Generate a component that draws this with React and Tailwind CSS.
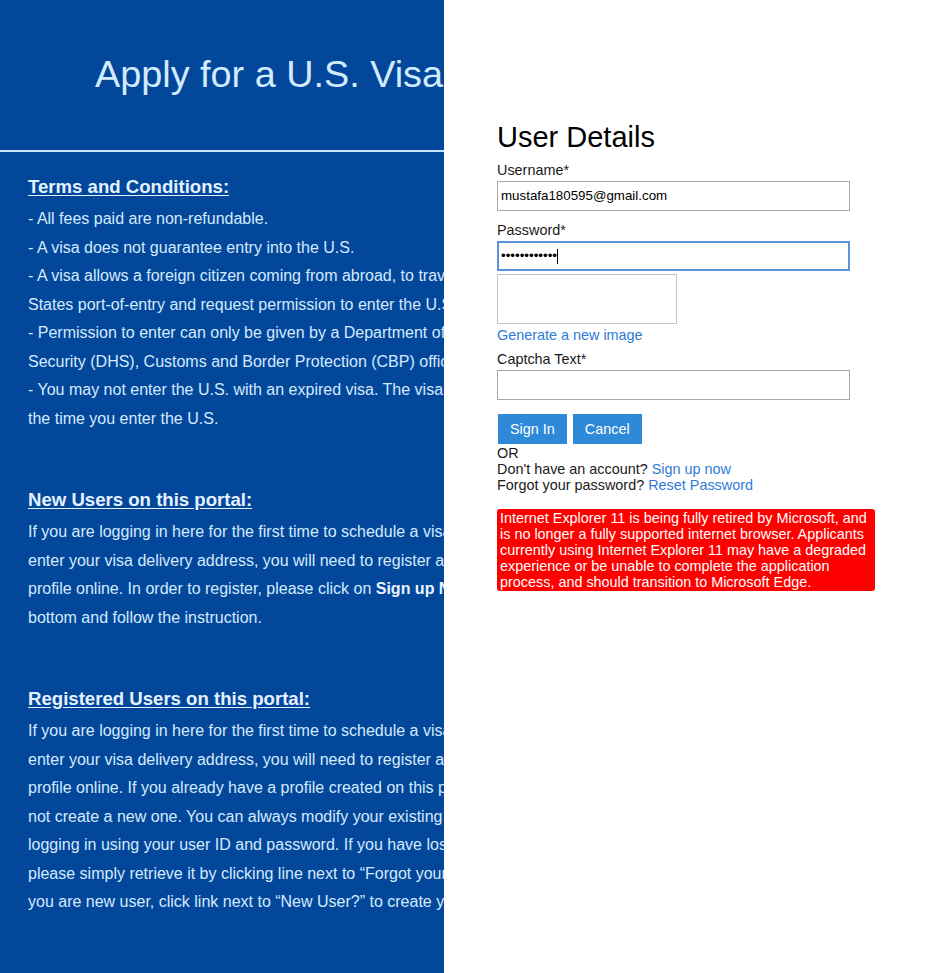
const terms = [
  ['- All fees paid are non-refundable.'],
  ['- A visa does not guarantee entry into the U.S.'],
  [
    '- A visa allows a foreign citizen coming from abroad, to travel to the United',
    'States port-of-entry and request permission to enter the U.S.',
  ],
  [
    '- Permission to enter can only be given by a Department of Homeland',
    'Security (DHS), Customs and Border Protection (CBP) officials.',
  ],
  [
    '- You may not enter the U.S. with an expired visa. The visa must be valid at',
    'the time you enter the U.S.',
  ],
]

const registered = [
  'If you are logging in here for the first time to schedule a visa appointment or',
  'enter your visa delivery address, you will need to register and create a',
  'profile online. If you already have a profile created on this portal, please do',
  'not create a new one. You can always modify your existing profile by',
  'logging in using your user ID and password. If you have lost your password,',
  'please simply retrieve it by clicking line next to \u201cForgot your password?\u201d. If',
  'you are new user, click link next to \u201cNew User?\u201d to create your profile.',
]

function Heading({ children, className = '' }) {
  return (
    <h2 className={`text-[18.6px] leading-[22px] font-bold underline underline-offset-2 text-[#e4f2ff] ${className}`}>
      {children}
    </h2>
  )
}

function Lines({ lines }) {
  return lines.map((l, i) => (
    <div key={i} className="whitespace-nowrap">
      {l}
    </div>
  ))
}

export default function App() {
  return (
    <div className="flex min-h-screen font-['Liberation_Sans',Arial,sans-serif]">
      {/* LEFT INFO COLUMN */}
      <div className="w-[444px] shrink-0 bg-[#03479a] overflow-hidden">
        <div className="h-[152px] border-b-2 border-[#c4e3ff] pl-[95px] pt-[53px]">
          <h1 className="text-[37.8px] leading-[43px] text-[#d2ebff] whitespace-nowrap">
            Apply for a U.S. Visa
          </h1>
        </div>

        <div className="w-[600px] pl-[28px] pt-[24px] text-[16px] leading-[28.5px] text-[#d3eaff]">
          {/* Terms */}
          <Heading>Terms and Conditions:</Heading>
          <div className="mt-[7px]">
            {terms.map((item, i) => (
              <Lines key={i} lines={item} />
            ))}
          </div>

          {/* New users */}
          <Heading className="mt-[56px]">New Users on this portal:</Heading>
          <div className="mt-[7px]">
            <div className="whitespace-nowrap">
              If you are logging in here for the first time to schedule a visa appointment or
            </div>
            <div className="whitespace-nowrap">
              enter your visa delivery address, you will need to register and create a
            </div>
            <div className="whitespace-nowrap">
              profile online. In order to register, please click on{' '}
              <b className="text-[#e8f4ff]">Sign up Now</b> link at the
            </div>
            <div className="whitespace-nowrap">bottom and follow the instruction.</div>
          </div>

          {/* Registered users */}
          <Heading className="mt-[56px]">Registered Users on this portal:</Heading>
          <div className="mt-[7px] pb-[40px]">
            <Lines lines={registered} />
          </div>
        </div>
      </div>

      {/* RIGHT FORM COLUMN */}
      <div className="flex-1 bg-white pl-[53px] pt-[121px] text-[14.4px] leading-[16px] text-[#1a1a1a]">
        <h1 className="text-[29px] leading-[33px] text-black">User Details</h1>

        <div className="mt-[8px]">Username*</div>
        <div className="mt-[3px] w-[353px] h-[30px] border border-[#a9a9a9] px-[3px] flex items-center text-[13.33px] text-black">
          mustafa180595@gmail.com
        </div>

        <div className="mt-[11px]">Password*</div>
        <div className="mt-[3px] w-[353px] h-[30px] border-2 border-[#5f92dc] px-[2px] flex items-center text-[13.33px] text-black">
          <span>••••••••••••</span>
          <span className="w-px h-[15px] bg-black" />
        </div>

        <div className="mt-[3px] w-[180px] h-[50px] border border-[#c4c4c4]" />

        <a href="#" className="block mt-[3px] text-[#2f7bd6]">
          Generate a new image
        </a>

        <div className="mt-[8px]">Captcha Text*</div>
        <div className="mt-[3px] w-[353px] h-[30px] border border-[#a9a9a9]" />

        <div className="mt-[14px] flex gap-[6px] pl-px">
          <button className="h-[30px] px-[12px] bg-[#2e8ad8] text-white text-[14.4px]">Sign In</button>
          <button className="h-[30px] px-[12px] bg-[#2e8ad8] text-white text-[14.4px]">Cancel</button>
        </div>

        <div className="mt-px">OR</div>
        <div>
          Don't have an account?{' '}
          <a href="#" className="text-[#2f7bd6]">
            Sign up now
          </a>
        </div>
        <div>
          Forgot your password?{' '}
          <a href="#" className="text-[#2f7bd6]">
            Reset Password
          </a>
        </div>

        <div className="mt-[16px] w-[378px] rounded-[3px] bg-[#ff0000] px-[3px] py-[1px] text-white">
          Internet Explorer 11 is being fully retired by Microsoft, and is no longer a fully supported
          internet browser. Applicants currently using Internet Explorer 11 may have a degraded
          experience or be unable to complete the application process, and should transition to
          Microsoft Edge.
        </div>
      </div>
    </div>
  )
}
